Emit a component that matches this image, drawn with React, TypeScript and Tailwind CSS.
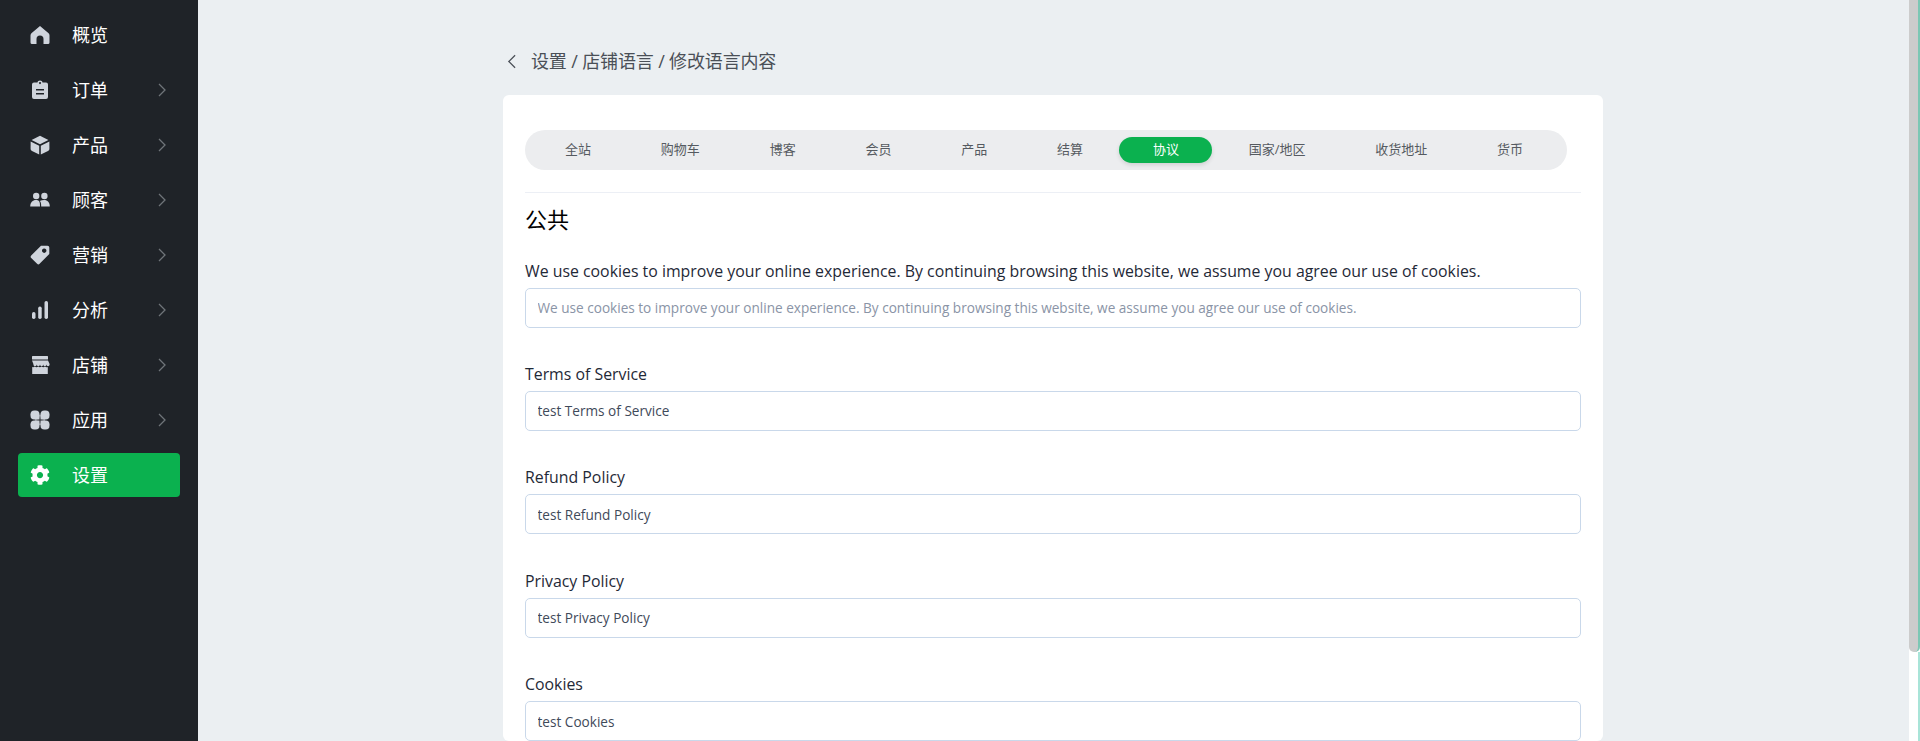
import { FaCog } from "react-icons/fa";

const font = "font-['Open_Sans','Noto_Sans_CJK_SC',sans-serif]";

const HomeIcon = () => (
  <svg viewBox="0 0 20 20" className="w-[20px] h-[20px] fill-[#cfd4dc]">
    <path d="M10 1 L18.3 8 C19 8.6 19.5 9.4 19.5 10.4 V17.5 a1.5 1.5 0 0 1-1.5 1.5 H13.5 V14 a3.5 3.5 0 0 0-7 0 V19 H2 a1.5 1.5 0 0 1-1.5-1.5 V10.4 C.5 9.4 1 8.6 1.7 8 Z" />
  </svg>
);
const OrderIcon = () => (
  <svg viewBox="0 0 20 20" className="w-[20px] h-[20px] fill-[#cfd4dc]">
    <path
      fillRule="evenodd"
      d="M7.5 2.5 C7.5 1.2 8.7.5 10 .5 S12.5 1.2 12.5 2.5 H16 a2 2 0 0 1 2 2 V17 a2 2 0 0 1-2 2 H4 a2 2 0 0 1-2-2 V4.5 a2 2 0 0 1 2-2 Z M10 2 a1 1 0 1 0 .01 0 Z M6 9 V10.6 H14 V9 Z M6 13 V14.6 H14 V13 Z"
    />
  </svg>
);
const BoxIcon = () => (
  <svg viewBox="0 0 20 20" className="w-[20px] h-[20px] fill-[#cfd4dc]">
    <path d="M10 .8 L18.4 5 L10 9.2 L1.6 5 Z" />
    <path d="M.6 6.6 L9.2 10.8 V19.4 L2 15.9 C1 15.4 .6 14.7 .6 13.8 Z" />
    <path d="M19.4 6.6 L10.8 10.8 V19.4 L18 15.9 C19 15.4 19.4 14.7 19.4 13.8 Z" />
  </svg>
);
const PeopleIcon = () => (
  <svg viewBox="0 0 20 20" className="w-[20px] h-[20px] fill-[#cfd4dc]">
    <circle cx="6.2" cy="6" r="3.2" />
    <circle cx="14.4" cy="6" r="3.2" />
    <path d="M.2 16.5 C.2 12.5 2.6 10 6 10 S10 12 10 16.5 Z" />
    <path d="M11.2 16.5 C11.2 13.5 10.8 12 9.8 11 C11 10.3 12.5 10 14 10 C17.6 10 19.8 12.5 19.8 16.5 Z" />
  </svg>
);
const TagIcon = () => (
  <svg viewBox="0 0 20 20" className="w-[20px] h-[20px] fill-[#cfd4dc]">
    <path
      fillRule="evenodd"
      d="M11 .8 H17.5 a1.8 1.8 0 0 1 1.8 1.8 V9 L9.6 18.8 a1.8 1.8 0 0 1-2.5 0 L1.2 12.9 a1.8 1.8 0 0 1 0-2.5 Z M14.2 3.5 a2.2 2.2 0 1 0 .01 0 Z"
    />
  </svg>
);
const ChartIcon = () => (
  <svg viewBox="0 0 20 20" className="w-[20px] h-[20px] fill-[#cfd4dc]">
    <rect x="2" y="12" width="3.5" height="7" rx="1.7" />
    <rect x="8.2" y="6.5" width="3.5" height="12.5" rx="1.7" />
    <rect x="14.5" y="1" width="3.5" height="18" rx="1.7" />
  </svg>
);
const StoreIcon = () => (
  <svg viewBox="0 0 20 20" className="w-[20px] h-[20px] fill-[#cfd4dc]">
    <rect x="2" y="1" width="16" height="3.5" rx=".5" />
    <path d="M2 5.5 H18 L19.6 9 V9.6 a1.6 1.6 0 0 1-3.2 0 a1.6 1.6 0 0 1-3.2 0 a1.6 1.6 0 0 1-3.2 0 a1.6 1.6 0 0 1-3.2 0 a1.6 1.6 0 0 1-3.4 0 V9 Z" />
    <path d="M2.2 12 a3 3 0 0 0 2.6-.4 a3 3 0 0 0 3.4 0 a3 3 0 0 0 3.4 0 a3 3 0 0 0 3.4 0 a3 3 0 0 0 2.8.4 V19 H2.2 Z" />
  </svg>
);
const AppsIcon = () => (
  <svg viewBox="0 0 20 20" className="w-[20px] h-[20px] fill-[#cfd4dc]">
    <rect x=".5" y=".5" width="9" height="9" rx="3.8" />
    <rect x="10.5" y=".5" width="9" height="9" rx="3.8" />
    <rect x=".5" y="10.5" width="9" height="9" rx="3.8" />
    <rect x="10.5" y="10.5" width="9" height="9" rx="3.8" />
    <rect x="5" y="5" width="4.5" height="4.5" />
    <rect x="10.5" y="5" width="4.5" height="4.5" />
    <rect x="5" y="10.5" width="4.5" height="4.5" />
    <rect x="10.5" y="10.5" width="4.5" height="4.5" />
  </svg>
);

const navItems = [
  { label: "概览", icon: <HomeIcon /> },
  { label: "订单", icon: <OrderIcon />, arrow: true },
  { label: "产品", icon: <BoxIcon />, arrow: true },
  { label: "顾客", icon: <PeopleIcon />, arrow: true },
  { label: "营销", icon: <TagIcon />, arrow: true },
  { label: "分析", icon: <ChartIcon />, arrow: true },
  { label: "店铺", icon: <StoreIcon />, arrow: true },
  { label: "应用", icon: <AppsIcon />, arrow: true },
];

const tabs = ["全站", "购物车", "博客", "会员", "产品", "结算", "协议", "国家/地区", "收货地址", "货币"];

const cookieText =
  "We use cookies to improve your online experience. By continuing browsing this website, we assume you agree our use of cookies.";

const fields = [
  { label: cookieText, placeholder: cookieText, value: "" },
  { label: "Terms of Service", value: "test Terms of Service" },
  { label: "Refund Policy", value: "test Refund Policy" },
  { label: "Privacy Policy", value: "test Privacy Policy" },
  { label: "Cookies", value: "test Cookies" },
];

export default function App() {
  return (
    <div className={`relative flex h-[741px] w-[1920px] overflow-hidden bg-[#ebeff2] ${font}`}>
      {/* Sidebar */}
      <aside className="w-[198px] shrink-0 bg-[#1f2328] pt-[13px] px-[18px]">
        <nav className="flex flex-col gap-[11px]">
          {navItems.map((item) => (
            <div key={item.label} className="flex h-[44px] items-center pl-[12px] pr-[14px]">
              <span className="flex w-[20px] justify-center">{item.icon}</span>
              <span className="ml-[22px] flex-1 text-[18px] text-white">{item.label}</span>
              {item.arrow && (
                <svg viewBox="0 0 8 14" className="h-[14px] w-[8px] fill-none stroke-[#6f7479] stroke-[1.3]">
                  <path d="M1 1 L7 7 L1 13" />
                </svg>
              )}
            </div>
          ))}
          <div className="flex h-[44px] items-center rounded-[4px] bg-[#0bb14f] pl-[12px]">
            <span className="flex w-[20px] justify-center">
              <FaCog className="h-[20px] w-[20px] text-white" />
            </span>
            <span className="ml-[22px] text-[18px] text-white">设置</span>
          </div>
        </nav>
      </aside>

      {/* Main */}
      <main className="flex-1 pl-[305px] pt-[48px]">
        <div className="mb-[20px] flex h-[27px] items-center text-[18px] text-[#4a4f57]">
          <svg viewBox="0 0 10 16" className="ml-[4px] mr-[15px] h-[15px] w-[9px] fill-none stroke-[#4a4f57] stroke-[1.4]">
            <path d="M9 1 L2 8 L9 15" />
          </svg>
          <span className="tracking-[-0.15px]">设置 / 店铺语言 / 修改语言内容</span>
        </div>

        <section className="w-[1100px] rounded-[6px] bg-white pl-[22px] pr-[22px] pt-[35px]">
          <div className="flex h-[40px] w-[1042px] items-center gap-[2.8px] rounded-full bg-[#ecedef] pl-[6.5px]">
            {tabs.map((tab) => (
              <div
                key={tab}
                className={
                  tab === "协议"
                    ? "flex h-[26px] items-center rounded-full bg-[#0bb14f] px-[33.5px] text-[13px] text-white shadow-[0_2px_4px_rgba(0,0,0,0.12)]"
                    : "flex h-[26px] items-center px-[33.5px] text-[13px] text-[#555a60]"
                }
              >
                {tab}
              </div>
            ))}
          </div>

          <div className="mt-[22px] border-t border-[#eceff5] pt-[12px]">
            <h2 className="mb-[26.5px] text-[22px] leading-[28px] font-normal text-black">公共</h2>
            {fields.map((field) => (
              <div key={field.label} className="mb-[35.4px]">
                <label className="mb-[5px] block text-[15.87px] leading-[23px] text-[#1f2937]">{field.label}</label>
                <input
                  readOnly
                  value={field.value}
                  placeholder={field.placeholder}
                  className="block h-[40px] w-full rounded-[5px] border border-[#c9d8ea] bg-white px-[11.5px] text-[13.6px] text-[#3f4a5a] outline-none placeholder:text-[#8a94a6]"
                />
              </div>
            ))}
          </div>
        </section>
      </main>

      {/* Scrollbar */}
      <div className="absolute inset-y-0 right-0 flex w-[11px] flex-col bg-white">
        <div className="h-[652px] rounded-b-[5px] border-r-2 border-[#7cc7b4] bg-[#cccccc]" />
        <div className="flex-1 border-r-2 border-[#a9e4d8]" />
      </div>
    </div>
  );
}
